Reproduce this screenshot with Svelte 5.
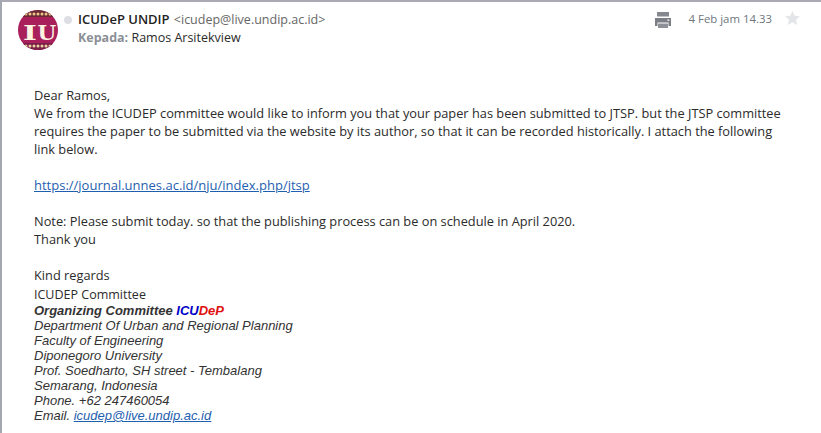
<script>
    const sig = [
        "Department Of Urban and Regional Planning",
        "Faculty of Engineering",
        "Diponegoro University",
        "Prof. Soedharto, SH street - Tembalang",
        "Semarang, Indonesia",
        "Phone. +62 247460054"
    ];
    const beads = [0, 1, 2, 3, 4, 5, 6];
</script>

<div class="mail">
    <header>
        <svg class="avatar" viewBox="0 0 40 40" width="40" height="40">
            <defs>
                <clipPath id="round"><circle cx="20" cy="20" r="20" /></clipPath>
            </defs>
            <g clip-path="url(#round)">
                <rect width="40" height="40" fill="#a81f5c" />
                <rect width="40" height="7" fill="#6d2a36" />
                <rect y="33" width="40" height="7" fill="#7c1f48" />
                {#each beads as b}
                    <circle cx={8 + b * 4} cy="4" r="1.5" fill="#e8c98a" />
                    <circle cx={8 + b * 4} cy="36" r="1.5" fill="#e8d5a0" />
                {/each}
                <text transform="translate(5 30) scale(1.45 1)" class="iu">I</text>
                <text transform="translate(19.500 30) scale(1.05 1)" class="iu">U</text>
            </g>
        </svg>
        <span class="dot"></span>
        <div class="who">
            <div class="from"><b>ICUDeP UNDIP</b> <span class="addr">&lt;icudep@live.undip.ac.id&gt;</span></div>
            <div class="to"><b>Kepada:</b> Ramos Arsitekview</div>
        </div>
        <svg class="print" viewBox="0 0 16 16" width="16" height="16">
            <path d="M2 0h12v4.500H2z" fill="#85898f" />
            <path d="M0 6h16v8h-2.500v-3.500h-11V14H0z" fill="#7b7f85" />
            <rect x="3" y="11.500" width="10" height="4.500" fill="#8d9197" />
            <rect x="12.500" y="7.500" width="1.800" height="1.300" fill="#fff" />
        </svg>
        <span class="date">4 Feb jam 14.33</span>
        <svg class="star" viewBox="0 0 16 15" width="15" height="14">
            <path d="M8 0l2.300 5.200 5.700.5-4.300 3.700 1.300 5.600L8 12l-5 3 1.300-5.600L0 5.700l5.700-.5z" fill="#e3e5e8" />
        </svg>
    </header>

    <div class="body">
        <p>Dear Ramos,<br />
        We from the ICUDEP committee would like to inform you that your paper has been submitted to JTSP. but the JTSP committee<br />
        requires the paper to be submitted via the website by its author, so that it can be recorded historically. I attach the following<br />
        link below.</p>
        <p class="link"><a href="#top">https://journal.unnes.ac.id/nju/index.php/jtsp</a></p>
        <p>Note: Please submit today. so that the publishing process can be on schedule in April 2020.<br />Thank you</p>
        <p class="regards">Kind regards</p>
        <div class="committee">ICUDEP Committee</div>
        <div class="sig">
            <div class="org">Organizing Committee <span class="blue">ICU</span><span class="red">DeP</span></div>
            {#each sig as line}
                <div>{line}</div>
            {/each}
            <div>Email. <a href="#top">icudep@live.undip.ac.id</a></div>
        </div>
    </div>
</div>

<style>
    :global(body) {
        background: #fff;
    }
    .mail {
        width: 821px;
        height: 433px;
        box-sizing: border-box;
        border-top: 2px solid #a9a9b3;
        border-left: 2px solid #a3a8b0;
        overflow: hidden;
        font-family: "Open Sans", "Noto Sans", sans-serif;
        font-size: 12.800px;
        color: #2b2b2b;
    }
    header {
        display: flex;
        align-items: flex-start;
        padding: 8px 21px 0 16px;
        height: 53px;
        box-sizing: border-box;
        font-size: 12.500px;
    }
    .avatar {
        flex: none;
    }
    .dot {
        width: 8px;
        height: 8px;
        border-radius: 50%;
        background: #dcdfe4;
        margin: 6px 6px 0 6px;
    }
    .who {
        flex: 1;
        line-height: 18px;
    }
    .from b {
        color: #222;
        font-size: 13px;
        font-weight: 600;
    }
    .addr {
        color: #666;
        margin-left: 1px;
    }
    .to b {
        color: #8b8f96;
        font-weight: 700;
    }
    .print {
        margin: 2px 0 0 0;
    }
    .date {
        color: #6f7780;
        margin: 1px 13px 0 18px;
        font-size: 11.400px;
    }
    .star {
        margin-top: 1px;
    }
    .body {
        padding: 31px 20px 0 32px;
        line-height: 18px;
    }
    p {
        margin: 0 0 18px;
    }
    .link {
        font-size: 13px;
    }
    a {
        color: #1f5fb0;
    }
    .regards {
        margin-bottom: 2px;
    }
    .committee {
        line-height: 17px;
        font-size: 12.500px;
    }
    .sig {
        font-family: "Liberation Sans", Arial, sans-serif;
        font-style: italic;
        font-size: 13px;
        line-height: 15px;
        color: #333;
    }
    .org {
        font-weight: 700;
    }
    .blue {
        color: #0000c8;
    }
    .red {
        color: #e01010;
    }
    .iu {
        font-family: "DejaVu Serif", serif;
        font-weight: 700;
        font-size: 20.500px;
        fill: #fdf3e0;
    }
</style>
